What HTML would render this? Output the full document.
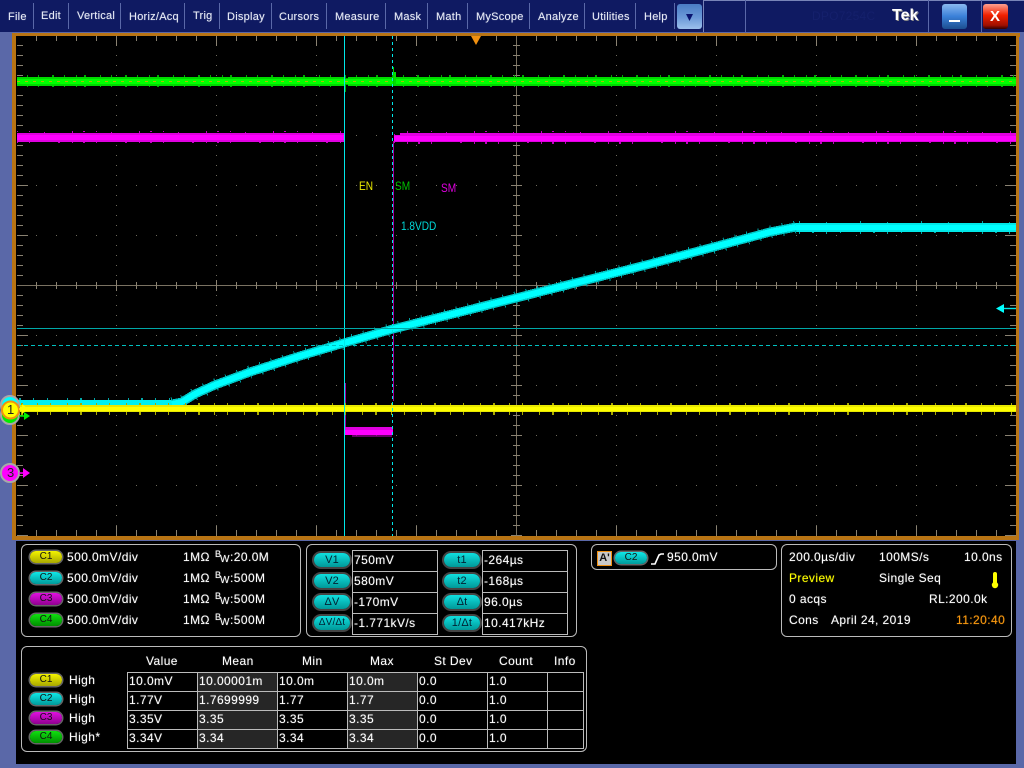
<!DOCTYPE html>
<html><head><meta charset="utf-8"><title>Oscilloscope</title>
<style>
html,body{margin:0;padding:0;background:#5a68a8;width:1024px;height:768px;overflow:hidden}
body{position:relative;font-family:"Liberation Sans",sans-serif}
#top{position:absolute;left:0;top:0;width:1024px;height:32px;background:#0f1a62}
.m{position:absolute;top:10px;font-size:11px;line-height:14px;color:#e8ecf8;letter-spacing:.25px;white-space:nowrap;text-shadow:0 0 1px rgba(255,255,255,.45)}
.s{position:absolute;top:3px;height:26px;width:1px;background:#5a68a8}
.btn{position:absolute;top:4px;width:25px;height:25px;border-radius:3px}
svg{position:absolute;left:0;top:0}
#pan{position:absolute;left:16px;top:541px;width:1000px;height:223px;background:#000}
.b{position:absolute;border:1px solid #bbb;border-radius:6px;box-sizing:border-box}
.t{position:absolute;font-size:12px;line-height:14px;color:#fff;letter-spacing:.42px;white-space:nowrap;text-shadow:0 0 1px rgba(255,255,255,.5)}
.p{position:absolute;width:32px;height:12px;border-radius:6px;font-size:10px;line-height:12px;text-align:center;color:#111;box-shadow:0 0 0 1.5px #666}
.y{background:linear-gradient(#f4f400,#a8a800)}
.c{background:linear-gradient(#10e8e8,#009a9a)}
.g{background:linear-gradient(#e010e0,#900090)}
.n{background:linear-gradient(#10e010,#009000)}
.q{position:absolute;width:36px;height:14px;border-radius:7px;background:linear-gradient(#10e0e0,#009898);font-size:11px;line-height:14px;text-align:center;color:#023;box-shadow:0 0 0 2px #444;letter-spacing:.2px;white-space:nowrap}
.l{position:absolute;background:#bbb}
.d{position:absolute;background:#262626}
.tr{position:absolute;font-size:12px;line-height:14px;white-space:nowrap;transform-origin:0 50%;transform:scaleX(.84)}
.w{position:absolute;font-size:10px;line-height:12px;color:#fff;text-shadow:0 0 1px rgba(255,255,255,.5)}
.bb{position:absolute;font-size:9px;line-height:11px;color:#fff;text-shadow:0 0 1px rgba(255,255,255,.5)}
</style></head><body>
<div id="top"></div>
<span class="m" style="left:8px">File</span><span class="m" style="left:41px;top:9px">Edit</span><span class="m" style="left:77px;top:9px">Vertical</span><span class="m" style="left:129px">Horiz/Acq</span><span class="m" style="left:193px;top:9px">Trig</span><span class="m" style="left:227px">Display</span><span class="m" style="left:279px">Cursors</span><span class="m" style="left:335px">Measure</span><span class="m" style="left:394px">Mask</span><span class="m" style="left:436px">Math</span><span class="m" style="left:476px">MyScope</span><span class="m" style="left:538px">Analyze</span><span class="m" style="left:592px">Utilities</span><span class="m" style="left:644px">Help</span>
<div class="s" style="left:33px"></div><div class="s" style="left:68px"></div><div class="s" style="left:120px"></div><div class="s" style="left:184px"></div><div class="s" style="left:219px"></div><div class="s" style="left:271px"></div><div class="s" style="left:326px"></div><div class="s" style="left:385px"></div><div class="s" style="left:427px"></div><div class="s" style="left:467px"></div><div class="s" style="left:529px"></div><div class="s" style="left:584px"></div><div class="s" style="left:635px"></div><div class="s" style="left:674px"></div>
<div class="s" style="left:703px;top:0;height:32px;background:#7884b8"></div><div style="position:absolute;left:703px;top:0;width:321px;height:1px;background:#7884b8"></div>
<div class="s" style="left:745px;top:0;height:32px"></div><div class="s" style="left:928px;top:0;height:32px"></div><div class="s" style="left:981px;top:0;height:32px"></div>
<div class="btn" style="left:677px;background:linear-gradient(#4a7cc4,#6c9ad8 55%,#9cc0ec)"></div>
<svg width="1024" height="32" style="z-index:2"><path d="M686 14h7l-3.5 7z" fill="#0a1470"/></svg>
<span class="m" style="left:812px;top:9px;font-size:12px;color:#15206c;text-shadow:none">DPO7254C</span>
<span class="m" style="left:892px;top:7px;font-size:16px;line-height:18px;font-weight:bold;color:#fff;letter-spacing:0;text-shadow:1px 1px 0 #8a8a8a">Tek</span>
<div class="btn" style="left:942px;background:linear-gradient(#8ab8f0,#3a80d8 50%,#1c4e90)"><div style="position:absolute;left:7px;top:16px;width:11px;height:2px;background:#fff"></div></div>
<div class="btn" style="left:983px;background:linear-gradient(#ffa090,#f02000 45%,#a01000 85%,#300)"><span style="position:absolute;left:7px;top:4px;color:#fff;font-size:15px;line-height:17px;font-weight:bold">X</span></div>

<svg width="1024" height="541" shape-rendering="crispEdges">
<defs>
<pattern id="tv" width="20" height="600" patternUnits="userSpaceOnUse"><rect x="16" y="0" width="1" height="600" fill="#8a8272"/></pattern>
<pattern id="tvM" width="100" height="600" patternUnits="userSpaceOnUse"><rect x="16" y="0" width="1" height="600" fill="#8a8272"/></pattern>
<pattern id="th" width="1100" height="10" patternUnits="userSpaceOnUse"><rect x="0" y="5" width="1100" height="1" fill="#8a8272"/></pattern>
<pattern id="thM" width="1100" height="50" patternUnits="userSpaceOnUse"><rect x="0" y="35" width="1100" height="1" fill="#8a8272"/></pattern>
<pattern id="rows" width="20" height="50" patternUnits="userSpaceOnUse"><rect x="16" y="35" width="1" height="1" fill="#6e6a5c"/></pattern>
<pattern id="cols" width="100" height="10" patternUnits="userSpaceOnUse"><rect x="16" y="5" width="1" height="1" fill="#6e6a5c"/></pattern>
<pattern id="ng" width="73" height="12" patternUnits="userSpaceOnUse"><rect x="3" y="0" width="1" height="12" fill="#0a0"/><rect x="11" y="2" width="2" height="10" fill="#0a0"/><rect x="27" y="0" width="1" height="9" fill="#0a0"/><rect x="38" y="2" width="1" height="10" fill="#0a0"/><rect x="52" y="1" width="2" height="9" fill="#0a0"/><rect x="64" y="2" width="1" height="10" fill="#0a0"/></pattern>
<pattern id="nm" width="67" height="12" patternUnits="userSpaceOnUse"><rect x="5" y="0" width="1" height="12" fill="#c000c0"/><rect x="16" y="2" width="2" height="10" fill="#c000c0"/><rect x="29" y="1" width="1" height="11" fill="#c000c0"/><rect x="44" y="0" width="1" height="10" fill="#c000c0"/><rect x="58" y="2" width="2" height="9" fill="#c000c0"/></pattern>
<pattern id="nc" width="61" height="13" patternUnits="userSpaceOnUse"><rect x="6" y="0" width="1" height="13" fill="#00a8a8"/><rect x="19" y="2" width="2" height="10" fill="#00a8a8"/><rect x="33" y="1" width="1" height="12" fill="#00a8a8"/><rect x="47" y="2" width="1" height="10" fill="#00a8a8"/></pattern>
<pattern id="ny" width="59" height="12" patternUnits="userSpaceOnUse"><rect x="8" y="0" width="1" height="12" fill="#a8a800"/><rect x="21" y="1" width="2" height="10" fill="#a8a800"/><rect x="37" y="0" width="1" height="11" fill="#a8a800"/><rect x="50" y="2" width="1" height="10" fill="#a8a800"/></pattern>
</defs>
<rect x="12" y="33" width="1008" height="507" fill="#b87414"/>
<rect x="1017" y="33" width="7" height="4" fill="#5a68a8"/><rect x="1019" y="37" width="5" height="503" fill="#5a68a8"/>
<rect x="1017" y="33" width="3" height="4" fill="#b87414"/>
<rect x="16" y="36" width="1001" height="500" fill="#000"/>
<rect x="1016" y="36" width="3" height="500" fill="#b87414"/>
<rect x="17" y="36" width="999" height="500" fill="url(#rows)"/>
<rect x="17" y="36" width="999" height="500" fill="url(#cols)"/>
<rect x="17" y="36" width="999" height="5" fill="url(#tv)"/><rect x="17" y="36" width="999" height="10" fill="url(#tvM)"/>
<rect x="17" y="530" width="999" height="6" fill="url(#tv)"/><rect x="17" y="526" width="999" height="10" fill="url(#tvM)"/>
<rect x="17" y="36" width="6" height="500" fill="url(#th)"/><rect x="17" y="36" width="11" height="500" fill="url(#thM)"/>
<rect x="1010" y="36" width="6" height="500" fill="url(#th)"/><rect x="1005" y="36" width="11" height="500" fill="url(#thM)"/>
<rect x="17" y="285" width="999" height="1" fill="#7a7262"/><rect x="516" y="36" width="1" height="500" fill="#7a7262"/>
<rect x="17" y="282" width="999" height="7" fill="url(#tv)"/><rect x="17" y="280" width="999" height="11" fill="url(#tvM)"/>
<rect x="513" y="36" width="7" height="500" fill="url(#th)"/><rect x="511" y="36" width="11" height="500" fill="url(#thM)"/>

<!-- green -->
<rect x="17" y="75" width="999" height="12" fill="url(#ng)"/>
<rect x="17" y="77" width="327" height="9" fill="#00d800"/><rect x="348" y="77" width="668" height="9" fill="#00d800"/><rect x="344" y="78" width="4" height="7" fill="#0a0"/>
<rect x="17" y="79" width="999" height="5" fill="#00ff00"/>
<path d="M17 81.5H1016" stroke="#a8c000" stroke-width="1" stroke-dasharray="3 5" fill="none"/>
<rect x="393" y="67" width="1" height="19" fill="#00d000"/><rect x="394" y="72" width="2" height="14" fill="#00e000"/><rect x="345" y="85" width="1" height="7" fill="#0a0"/>
<!-- magenta -->
<rect x="17" y="131" width="327" height="12" fill="url(#nm)"/><rect x="394" y="131" width="622" height="13" fill="url(#nm)"/>
<rect x="17" y="133" width="327" height="9" fill="#e000e0"/><rect x="400" y="133" width="616" height="9" fill="#e000e0"/><rect x="394" y="135" width="6" height="7" fill="#e000e0"/><rect x="394" y="136" width="622" height="5" fill="#f0f"/><rect x="17" y="135" width="327" height="5" fill="#f0f"/>
<rect x="393" y="141" width="1" height="260" fill="#a000a0"/>
<rect x="345" y="383" width="1" height="44" fill="#a000a0"/>
<rect x="345" y="427" width="48" height="8" fill="#e000e0"/><rect x="345" y="430" width="48" height="5" fill="#f0f"/><rect x="352" y="435" width="40" height="2" fill="#900090" opacity=".7"/>
<!-- cyan -->
<rect x="17" y="398" width="165" height="12" fill="url(#nc)"/>
<rect x="794" y="221" width="222" height="13" fill="url(#nc)"/>
<rect x="17" y="400" width="160" height="7" fill="#00f0f0"/>
<rect x="794" y="223" width="222" height="9" fill="#00e8e8"/><rect x="794" y="225" width="222" height="5" fill="#0ff"/>
<polyline points="172,404 182,402 195,394 215,385 250,372 300,356 344,343 393,329 516,298 650,264 770,232 796,227" fill="none" stroke="#00a0a0" stroke-width="13" stroke-dasharray="1 11"/>
<polyline points="172,404 182,402 195,394 215,385 250,372 300,356 344,343 393,329 516,298 650,264 770,232 796,227" fill="none" stroke="#00c8c8" stroke-width="9"/>
<polyline points="172,404 182,402 195,394 215,385 250,372 300,356 344,343 393,329 516,298 650,264 770,232 796,227" fill="none" stroke="#0ff" stroke-width="6"/>
<!-- yellow -->
<rect x="20" y="403" width="996" height="12" fill="url(#ny)"/>
<rect x="20" y="405" width="996" height="7" fill="#e8e800"/><rect x="20" y="407" width="996" height="4" fill="#ff0"/>
<!-- cursors -->
<rect x="344" y="36" width="1" height="500" fill="#00e8e8"/>
<path d="M392.5 36V536" stroke="#00e8e8" stroke-width="1" stroke-dasharray="3 3" fill="none"/>
<rect x="17" y="328" width="999" height="1" fill="#00a8a8"/>
<path d="M17 345.5H1016" stroke="#00c0c0" stroke-width="1" stroke-dasharray="4 3" fill="none"/>
</svg>
<svg width="1024" height="541">
<path d="M471 36h10l-5 9z" fill="#f09010"/>
<path d="M1016 308.5h-12" stroke="#00e8e8" stroke-width="1.4"/><path d="M996 308.5l8-4.5v9z" fill="#0ff"/>
<circle cx="10" cy="405" r="9" fill="#0ff" stroke="#a8a8a8" stroke-width="2"/>
<circle cx="10" cy="415" r="9" fill="#0e0" stroke="#a8a8a8" stroke-width="2"/>
<circle cx="10.5" cy="410" r="8.5" fill="#ff0" stroke="#f09010" stroke-width="2"/>
<path d="M19 409h4" stroke="#ff0" stroke-width="1.5"/><path d="M22 404l6 5-6 5z" fill="#ff0"/>
<path d="M19 416h5" stroke="#0e0" stroke-width="1.5"/><path d="M24 412l6 4-6 4z" fill="#0e0"/>
<circle cx="10" cy="473" r="9" fill="#f0f" stroke="#a8a8a8" stroke-width="2"/>
<path d="M19 473h5" stroke="#f0f" stroke-width="1.5"/><path d="M23 468l7 5-7 5z" fill="#f0f"/>
</svg>
<span style="position:absolute;left:7px;top:403px;color:#222;font-size:13px;line-height:14px">1</span>
<span style="position:absolute;left:7px;top:466px;color:#222;font-size:13px;line-height:14px">3</span>
<span class="tr" style="left:359px;top:179px;color:#e8e800">EN</span>
<span class="tr" style="left:395px;top:179px;color:#00c000">SM</span>
<span class="tr" style="left:441px;top:181px;color:#e000e0">SM</span>
<span class="tr" style="left:401px;top:219px;color:#00d8d8">1.8VDD</span>

<div id="pan"></div>
<div class="b" style="left:21px;top:544px;width:280px;height:93px"></div>
<div class="b" style="left:306px;top:544px;width:271px;height:93px"></div>
<div class="b" style="left:591px;top:544px;width:186px;height:26px"></div>
<div class="b" style="left:781px;top:544px;width:231px;height:93px"></div>
<div class="b" style="left:21px;top:646px;width:566px;height:106px"></div>

<div class="p y" style="left:30px;top:551px">C1</div><span class="t" style="left:67px;top:550px">500.0mV/div</span><span class="t" style="left:183px;top:550px">1MΩ</span><span class="bb" style="left:215px;top:549px">B</span><span class="w" style="left:220px;top:554px">W</span><span class="t" style="left:230px;top:550px">:20.0M</span>
<div class="p c" style="left:30px;top:572px">C2</div><span class="t" style="left:67px;top:571px">500.0mV/div</span><span class="t" style="left:183px;top:571px">1MΩ</span><span class="bb" style="left:215px;top:570px">B</span><span class="w" style="left:220px;top:575px">W</span><span class="t" style="left:230px;top:571px">:500M</span>
<div class="p g" style="left:30px;top:593px">C3</div><span class="t" style="left:67px;top:592px">500.0mV/div</span><span class="t" style="left:183px;top:592px">1MΩ</span><span class="bb" style="left:215px;top:591px">B</span><span class="w" style="left:220px;top:596px">W</span><span class="t" style="left:230px;top:592px">:500M</span>
<div class="p n" style="left:30px;top:614px">C4</div><span class="t" style="left:67px;top:613px">500.0mV/div</span><span class="t" style="left:183px;top:613px">1MΩ</span><span class="bb" style="left:215px;top:612px">B</span><span class="w" style="left:220px;top:617px">W</span><span class="t" style="left:230px;top:613px">:500M</span>

<div class="q" style="left:314px;top:553px">V1</div><div class="q" style="left:314px;top:574px">V2</div><div class="q" style="left:314px;top:595px">ΔV</div><div class="q" style="left:314px;top:616px;font-size:10px">ΔV/Δt</div>
<div class="q" style="left:444px;top:553px">t1</div><div class="q" style="left:444px;top:574px">t2</div><div class="q" style="left:444px;top:595px">Δt</div><div class="q" style="left:444px;top:616px">1/Δt</div>
<div class="l" style="left:352px;top:550px;width:1px;height:85px"></div><div class="l" style="left:437px;top:550px;width:1px;height:85px"></div>
<div class="l" style="left:482px;top:550px;width:1px;height:85px"></div><div class="l" style="left:567px;top:550px;width:1px;height:85px"></div>
<div class="l" style="left:352px;top:550px;width:86px;height:1px"></div><div class="l" style="left:352px;top:571px;width:86px;height:1px"></div><div class="l" style="left:352px;top:592px;width:86px;height:1px"></div><div class="l" style="left:352px;top:613px;width:86px;height:1px"></div><div class="l" style="left:352px;top:634px;width:86px;height:1px"></div>
<div class="l" style="left:482px;top:550px;width:86px;height:1px"></div><div class="l" style="left:482px;top:571px;width:86px;height:1px"></div><div class="l" style="left:482px;top:592px;width:86px;height:1px"></div><div class="l" style="left:482px;top:613px;width:86px;height:1px"></div><div class="l" style="left:482px;top:634px;width:86px;height:1px"></div>
<span class="t" style="left:354px;top:553px">750mV</span><span class="t" style="left:354px;top:574px">580mV</span><span class="t" style="left:354px;top:595px">-170mV</span><span class="t" style="left:354px;top:616px">-1.771kV/s</span>
<span class="t" style="left:484px;top:553px">-264µs</span><span class="t" style="left:484px;top:574px">-168µs</span><span class="t" style="left:484px;top:595px">96.0µs</span><span class="t" style="left:484px;top:616px">10.417kHz</span>

<div style="position:absolute;left:597px;top:551px;width:13px;height:13px;border:1px solid #f09010;background:#c8c8c8;color:#111;font-size:11px;line-height:13px;font-weight:bold;text-align:center">A'</div>
<div class="p c" style="left:615px;top:552px">C2</div>
<svg width="1024" height="768" style="pointer-events:none"><path d="M651 564h4l4-9 2-1h3" fill="none" stroke="#fff" stroke-width="1.6"/><rect x="993" y="572" width="4" height="12" rx="2" fill="#ff0"/><circle cx="995" cy="585" r="3.2" fill="#ff0"/></svg>
<span class="t" style="left:667px;top:550px">950.0mV</span>

<span class="t" style="left:789px;top:550px">200.0µs/div</span><span class="t" style="left:879px;top:550px">100MS/s</span><span class="t" style="left:964px;top:550px">10.0ns</span>
<span class="t" style="left:789px;top:571px;color:#ff0;text-shadow:0 0 1px rgba(255,255,0,.5)">Preview</span><span class="t" style="left:879px;top:571px">Single Seq</span>
<span class="t" style="left:789px;top:592px">0 acqs</span><span class="t" style="left:929px;top:592px">RL:200.0k</span>
<span class="t" style="left:789px;top:613px">Cons</span><span class="t" style="left:831px;top:613px">April 24, 2019</span><span class="t" style="left:956px;top:613px;color:#f89810;text-shadow:0 0 1px rgba(248,152,16,.6)">11:20:40</span>

<span class="t" style="left:146px;top:654px">Value</span><span class="t" style="left:222px;top:654px">Mean</span><span class="t" style="left:302px;top:654px">Min</span><span class="t" style="left:370px;top:654px">Max</span><span class="t" style="left:434px;top:654px">St Dev</span><span class="t" style="left:499px;top:654px">Count</span><span class="t" style="left:554px;top:654px">Info</span>
<div class="p y" style="left:30px;top:674px">C1</div><span class="t" style="left:69px;top:673px">High</span>
<div class="p c" style="left:30px;top:693px">C2</div><span class="t" style="left:69px;top:692px">High</span>
<div class="p g" style="left:30px;top:712px">C3</div><span class="t" style="left:69px;top:711px">High</span>
<div class="p n" style="left:30px;top:731px">C4</div><span class="t" style="left:69px;top:730px">High*</span>

<div class="d" style="left:198px;top:672px;width:80px;height:77px"></div>
<div class="d" style="left:348px;top:672px;width:70px;height:77px"></div>
<div class="l" style="left:127px;top:672px;width:457px;height:1px"></div><div class="l" style="left:127px;top:691px;width:457px;height:1px"></div><div class="l" style="left:127px;top:710px;width:457px;height:1px"></div><div class="l" style="left:127px;top:729px;width:457px;height:1px"></div><div class="l" style="left:127px;top:748px;width:457px;height:1px"></div>
<div class="l" style="left:127px;top:672px;width:1px;height:77px"></div><div class="l" style="left:197px;top:672px;width:1px;height:77px"></div><div class="l" style="left:277px;top:672px;width:1px;height:77px"></div><div class="l" style="left:347px;top:672px;width:1px;height:77px"></div><div class="l" style="left:417px;top:672px;width:1px;height:77px"></div><div class="l" style="left:487px;top:672px;width:1px;height:77px"></div><div class="l" style="left:547px;top:672px;width:1px;height:77px"></div><div class="l" style="left:583px;top:672px;width:1px;height:77px"></div>

<span class="t" style="left:129px;top:674px">10.0mV</span><span class="t" style="left:199px;top:674px">10.00001m</span><span class="t" style="left:279px;top:674px">10.0m</span><span class="t" style="left:349px;top:674px">10.0m</span><span class="t" style="left:419px;top:674px">0.0</span><span class="t" style="left:489px;top:674px">1.0</span>
<span class="t" style="left:129px;top:693px">1.77V</span><span class="t" style="left:199px;top:693px">1.7699999</span><span class="t" style="left:279px;top:693px">1.77</span><span class="t" style="left:349px;top:693px">1.77</span><span class="t" style="left:419px;top:693px">0.0</span><span class="t" style="left:489px;top:693px">1.0</span>
<span class="t" style="left:129px;top:712px">3.35V</span><span class="t" style="left:199px;top:712px">3.35</span><span class="t" style="left:279px;top:712px">3.35</span><span class="t" style="left:349px;top:712px">3.35</span><span class="t" style="left:419px;top:712px">0.0</span><span class="t" style="left:489px;top:712px">1.0</span>
<span class="t" style="left:129px;top:731px">3.34V</span><span class="t" style="left:199px;top:731px">3.34</span><span class="t" style="left:279px;top:731px">3.34</span><span class="t" style="left:349px;top:731px">3.34</span><span class="t" style="left:419px;top:731px">0.0</span><span class="t" style="left:489px;top:731px">1.0</span>
</body></html>
